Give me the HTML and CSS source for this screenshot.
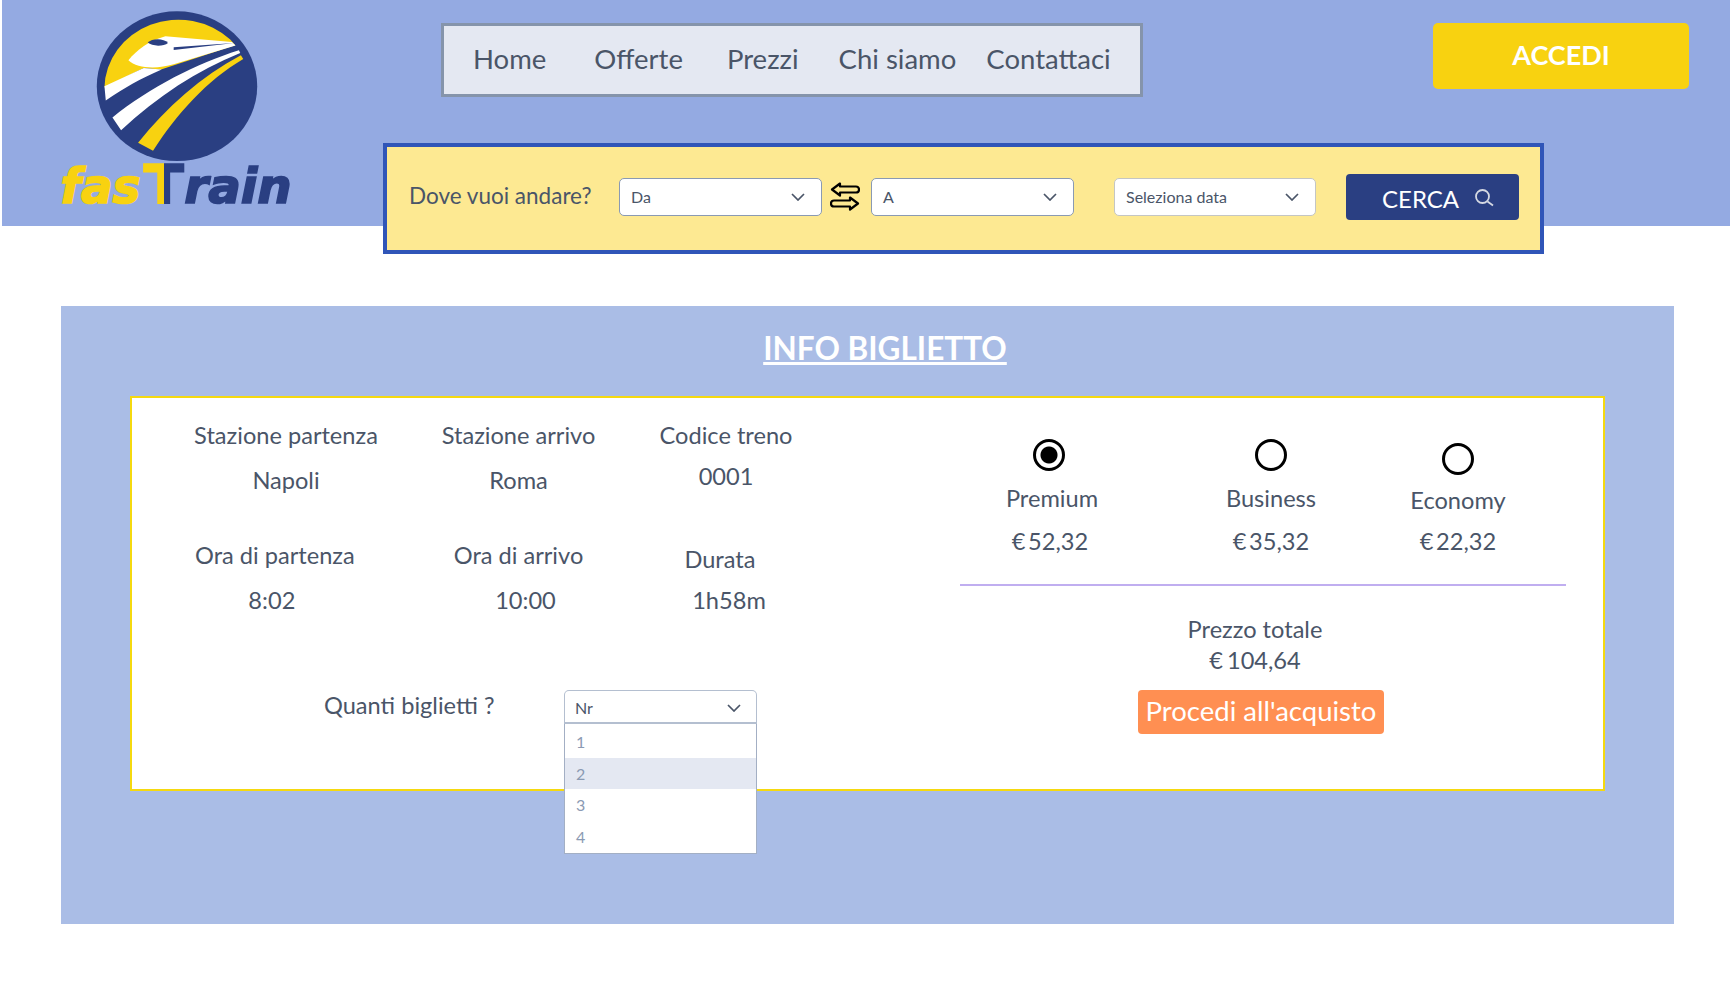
FILE: index.html
```html
<!DOCTYPE html>
<html lang="it">
<head>
    <meta charset="UTF-8">
    <meta name="viewport" content="width=device-width, initial-scale=1.0">
    <title>fasTrain - Info biglietto</title>
    <link rel="stylesheet" href="styles.css">
</head>
<body>

    <header class="header">
        <div class="logo">
            <svg class="logo-img" viewBox="170 20 720 640" aria-label="fasTrain">
                <defs>
                    <linearGradient id="halfT" x1="0" x2="1" y1="0" y2="0">
                        <stop offset="0.5" stop-color="#f8d210"/>
                        <stop offset="0.5" stop-color="#2a3f82"/>
                    </linearGradient>
                </defs>
                <ellipse cx="530" cy="258" rx="241" ry="225" fill="#2a3f82"/>
                <path d="M312 262 A222 208 0 0 1 690 118 L705 135 L482 208 L430 203 Z" fill="#f8d210"/>
                <path d="M384 180 C410 148 445 122 495 108 L695 125 L706 136 L520 192 C470 207 410 205 384 180 Z" fill="#fff"/>
                <path d="M442 127 C455 113 490 113 503 128 C490 139 455 139 442 127 Z" fill="#2a3f82"/>
                <path d="M520 141 L702 128 L520 149 Z" fill="#2a3f82"/>
                <path d="M312 258 L430 203 L484 208 C420 235 370 265 316 301 Z" fill="#fff"/>
                <path d="M716 150 L720 158 C590 210 470 290 362 390 L336 352 C450 260 590 190 716 150 Z" fill="#fff"/>
                <path d="M722 165 L729 176 C620 240 530 340 458 452 L413 428 C500 320 600 230 722 165 Z" fill="#f8d210"/>
                <text class="logo-text logo-yellow" x="180" y="610" font-size="146" textLength="240" lengthAdjust="spacingAndGlyphs">fas</text>
                <text class="logo-text logo-big" x="430" y="610" font-size="158" textLength="120" lengthAdjust="spacingAndGlyphs" fill="url(#halfT)" stroke="url(#halfT)">T</text>
                <text class="logo-text logo-navy" x="552" y="610" font-size="146" textLength="323" lengthAdjust="spacingAndGlyphs">rain</text>
            </svg>
        </div>

        <div class="header-right">
            <div class="top-row">
                <nav class="nav">
                    <a class="nav-item nav-home" href="#">Home</a>
                    <a class="nav-item nav-offerte" href="#">Offerte</a>
                    <a class="nav-item nav-prezzi" href="#">Prezzi</a>
                    <a class="nav-item nav-chi" href="#">Chi siamo</a>
                    <a class="nav-item" href="#">Contattaci</a>
                </nav>
                <button class="btn-accedi" type="button">ACCEDI</button>
            </div>

            <form class="search">
                <span class="search-label">Dove vuoi andare?</span>
                <div class="select select-da">
                    <span>Da</span>
                    <svg class="chevron" viewBox="0 0 14 8"><polyline points="1,1 7,7 13,1"/></svg>
                </div>
                <svg class="swap" viewBox="0 0 30 30">
                    <path d="M10 1.5 L2 7.5 L10 13.5 V10.5 H26 a3 3 0 0 0 0 -6 H10 Z"/>
                    <path d="M20 15.5 L28 21.5 L20 27.5 V24.5 H4 a3 3 0 0 1 0 -6 H20 Z"/>
                </svg>
                <div class="select select-a">
                    <span>A</span>
                    <svg class="chevron" viewBox="0 0 14 8"><polyline points="1,1 7,7 13,1"/></svg>
                </div>
                <div class="select select-data">
                    <span>Seleziona data</span>
                    <svg class="chevron" viewBox="0 0 14 8"><polyline points="1,1 7,7 13,1"/></svg>
                </div>
                <button class="btn-cerca" type="button">
                    CERCA
                    <svg class="search-icon" viewBox="0 0 20 20">
                        <circle cx="8.5" cy="8.5" r="6.5"/>
                        <line x1="13.5" y1="13.5" x2="19" y2="17.5"/>
                    </svg>
                </button>
            </form>
        </div>
    </header>

    <main class="panel">
        <h1 class="panel-title">INFO BIGLIETTO</h1>

        <section class="card">
            <div class="card-left">
                <div class="info-grid">
                    <div class="info">
                        <p class="info-text">Stazione partenza</p>
                        <p class="info-text info-value">Napoli</p>
                    </div>
                    <div class="info">
                        <p class="info-text">Stazione arrivo</p>
                        <p class="info-text info-value">Roma</p>
                    </div>
                    <div class="info">
                        <p class="info-text">Codice treno</p>
                        <p class="info-text info-value info-value-tight">0001</p>
                    </div>
                    <div class="info info-start">
                        <p class="info-text">Ora di partenza</p>
                        <p class="info-text info-value time-partenza">8:02</p>
                    </div>
                    <div class="info">
                        <p class="info-text">Ora di arrivo</p>
                        <p class="info-text info-value time-arrivo">10:00</p>
                    </div>
                    <div class="info">
                        <p class="info-text durata-label">Durata</p>
                        <p class="info-text info-value info-value-tight durata-value">1h58m</p>
                    </div>
                </div>

                <div class="quanti">
                    <span class="info-text quanti-label">Quanti biglietti ?</span>
                    <div class="dropdown">
                        <div class="dropdown-head">
                            <span>Nr</span>
                            <svg class="chevron" viewBox="0 0 14 8"><polyline points="1,1 7,7 13,1"/></svg>
                        </div>
                        <ul class="dropdown-list">
                            <li>1</li>
                            <li class="active">2</li>
                            <li>3</li>
                            <li>4</li>
                        </ul>
                    </div>
                </div>
            </div>

            <div class="card-right">
                <div class="tiers">
                    <div class="tier tier-premium">
                        <span class="radio checked"></span>
                        <p class="info-text tier-name">Premium</p>
                        <p class="info-text tier-price">€ 52,32</p>
                    </div>
                    <div class="tier">
                        <span class="radio"></span>
                        <p class="info-text tier-name">Business</p>
                        <p class="info-text tier-price">€ 35,32</p>
                    </div>
                    <div class="tier tier-economy">
                        <span class="radio"></span>
                        <p class="info-text tier-name">Economy</p>
                        <p class="info-text tier-price">€ 22,32</p>
                    </div>
                </div>

                <hr class="divider">

                <div class="total">
                    <p class="info-text">Prezzo totale</p>
                    <p class="info-text total-value">€ 104,64</p>
                </div>
                <button class="btn-acquisto" type="button">Procedi all'acquisto</button>
            </div>
        </section>
    </main>

</body>
</html>
```

FILE: styles.css
```css
/* Global Styles */
* {
    box-sizing: border-box;
}

body {
    font-family: Lato, "Open Sans", sans-serif;
    background-color: #fff;
    color: #4a5568;
    margin: 0;
    padding: 0;
}

p {
    margin: 0;
}

button {
    font-family: inherit;
    border: none;
    cursor: pointer;
}

/* Header */
.header {
    display: flex;
    height: 226px;
    margin: 0 3px 0 2px;
    background-color: #94aae2;
}

.logo {
    width: 381px;
    flex-shrink: 0;
    padding: 7px 0 0 55px;
}

.logo-img {
    display: block;
    width: 240px;
    height: 213px;
}

.logo-text {
    font-family: "DejaVu Sans", sans-serif;
    font-weight: bold;
    font-style: italic;
    stroke-width: 5px;
}

.logo-yellow {
    fill: #f8d210;
    stroke: #f8d210;
}

.logo-navy {
    fill: #2a3f82;
    stroke: #2a3f82;
}

.logo-big {
    font-style: normal;
}

.header-right {
    padding-top: 23px;
}

.top-row {
    display: flex;
    align-items: flex-start;
    margin-left: 58px;
}

/* Nav */
.nav {
    display: flex;
    align-items: center;
    width: 702px;
    height: 74px;
    padding: 0 0 4px 29px;
    background-color: #e4e8f2;
    border: 3px solid #8594ab;
}

.nav-item {
    font-size: 27.5px;
    color: #4a5568;
    text-decoration: none;
}

.nav-home {
    margin-right: 48px;
}

.nav-offerte {
    margin-right: 44px;
}

.nav-prezzi {
    margin-right: 40px;
}

.nav-chi {
    margin-right: 30px;
}

.btn-accedi {
    width: 256px;
    height: 66px;
    margin-left: 290px;
    padding: 0 0 4px;
    background-color: #f8d210;
    color: #fff;
    font-size: 27px;
    font-weight: bold;
    border-radius: 5px;
}

/* Search bar */
.search {
    display: flex;
    align-items: center;
    width: 1161px;
    height: 111px;
    margin-top: 46px;
    padding: 0 0 4px 22px;
    background-color: #fde992;
    border: 4px solid #3055b8;
}

.search-label {
    width: 181px;
    margin: 0 29px 2px 0;
    font-size: 22.5px;
    white-space: nowrap;
}

.select {
    display: flex;
    align-items: center;
    justify-content: space-between;
    width: 203px;
    height: 38px;
    padding: 0 16px 0 11px;
    background-color: #fff;
    border: 1px solid #8a9ab3;
    border-radius: 5px;
    font-size: 16px;
}

.select-data {
    width: 202px;
    margin-left: 40px;
    border-color: #c4c6c4;
}

.chevron {
    width: 14px;
    height: 8px;
    fill: none;
    stroke: #4a5568;
    stroke-width: 1.7;
}

.swap {
    width: 30px;
    height: 30px;
    margin: 0 11px 0 8px;
    fill: none;
    stroke: #000;
    stroke-width: 2.2;
    stroke-linejoin: round;
}

.btn-cerca {
    display: flex;
    align-items: center;
    width: 173px;
    height: 46px;
    margin-left: 30px;
    padding: 3px 0 0 36px;
    background-color: #2a3f82;
    color: #fff;
    font-size: 24px;
    border-radius: 4px;
}

.search-icon {
    width: 20px;
    height: 20px;
    margin-left: 15px;
    fill: none;
    stroke: #d5d9e3;
    stroke-width: 1.8;
}

/* Info panel */
.panel {
    height: 618px;
    margin: 80px 59px 0 61px;
    padding-top: 22px;
    background-color: #aabde6;
}

.panel-title {
    margin: 0 0 28px;
    padding-left: 35px;
    font-size: 31.5px;
    line-height: 40px;
    font-weight: bold;
    color: #fff;
    text-align: center;
    text-decoration: underline;
}

.card {
    display: flex;
    height: 395px;
    margin: 0 69px 0 69px;
    background-color: #fff;
    border: 2px solid #f5d90f;
}

.card-left {
    width: 828px;
    flex-shrink: 0;
    padding: 22px 0 0 63px;
}

.info-text {
    font-size: 23.6px;
    line-height: 30px;
    white-space: nowrap;
}

.info-grid {
    display: grid;
    grid-template-columns: 182px 155px 132px;
    column-gap: 64px;
    row-gap: 45px;
}

.info {
    display: flex;
    flex-direction: column;
    align-items: center;
}

.info-start {
    justify-self: start;
}

.info-value {
    margin-top: 15px;
}

.info-value-tight {
    margin-top: 11px;
}

.time-partenza {
    margin-right: 6px;
}

.time-arrivo {
    margin-left: 14px;
}

.durata-label {
    margin: 4px 12px 0 0;
}

.durata-value {
    margin-left: 6px;
}

/* Ticket count */
.quanti {
    display: flex;
    margin: 75px 0 0 129px;
}

.quanti-label {
    width: 171px;
    margin: 0 69px 0 0;
}

.dropdown {
    position: relative;
    width: 193px;
    font-size: 16px;
}

.dropdown-head {
    display: flex;
    align-items: center;
    justify-content: space-between;
    height: 34px;
    padding: 2px 15px 0 10px;
    background-color: #fff;
    border: 1px solid #b4bfd0;
    border-bottom-width: 2px;
    border-radius: 5px 5px 0 0;
}

.dropdown-list {
    position: absolute;
    top: 34px;
    left: 0;
    right: 0;
    height: 130px;
    margin: 0;
    padding: 2px 0 0;
    list-style: none;
    background-color: #fff;
    border: 1px solid #a3afc4;
    border-top: none;
    color: #8b9ab3;
}

.dropdown-list li {
    height: 31.5px;
    line-height: 31.5px;
    padding-left: 11px;
}

.dropdown-list .active {
    background-color: #e4e8f2;
}

/* Ticket classes */
.card-right {
    width: 606px;
    padding-top: 41px;
    text-align: center;
}

.tiers {
    display: grid;
    grid-template-columns: 180px 262px 112px;
}

.tier {
    display: flex;
    flex-direction: column;
    align-items: center;
}

.radio {
    display: block;
    width: 32px;
    height: 32px;
    background-color: #fff;
    border: 3px solid #000;
    border-radius: 50%;
}

.radio.checked {
    background: radial-gradient(circle, #000 0 8px, #fff 9px);
}

.tier-name {
    margin-top: 12px;
}

.tier-price {
    margin-top: 13px;
    word-spacing: -3.5px;
}

.tier-premium .radio {
    margin-right: 2px;
}

.tier-premium .tier-name {
    margin-left: 4px;
}

.tier-economy .radio {
    margin-top: 4px;
}

.tier-economy .tier-name {
    margin-top: 10px;
}

.tier-economy .tier-price {
    margin-top: 11px;
}

.divider {
    height: 2px;
    margin: 28px 0 28px;
    background-color: #c0aef0;
    border: none;
}

.total {
    padding-right: 16px;
}

.total-value {
    margin-top: 1px;
    word-spacing: -2px;
}

.btn-acquisto {
    width: 246px;
    height: 44px;
    margin: 15px 4px 0 0;
    padding: 0 0 3px;
    background-color: #ff8f52;
    color: #fff;
    font-size: 27.5px;
    white-space: nowrap;
    border-radius: 4px;
}
```
